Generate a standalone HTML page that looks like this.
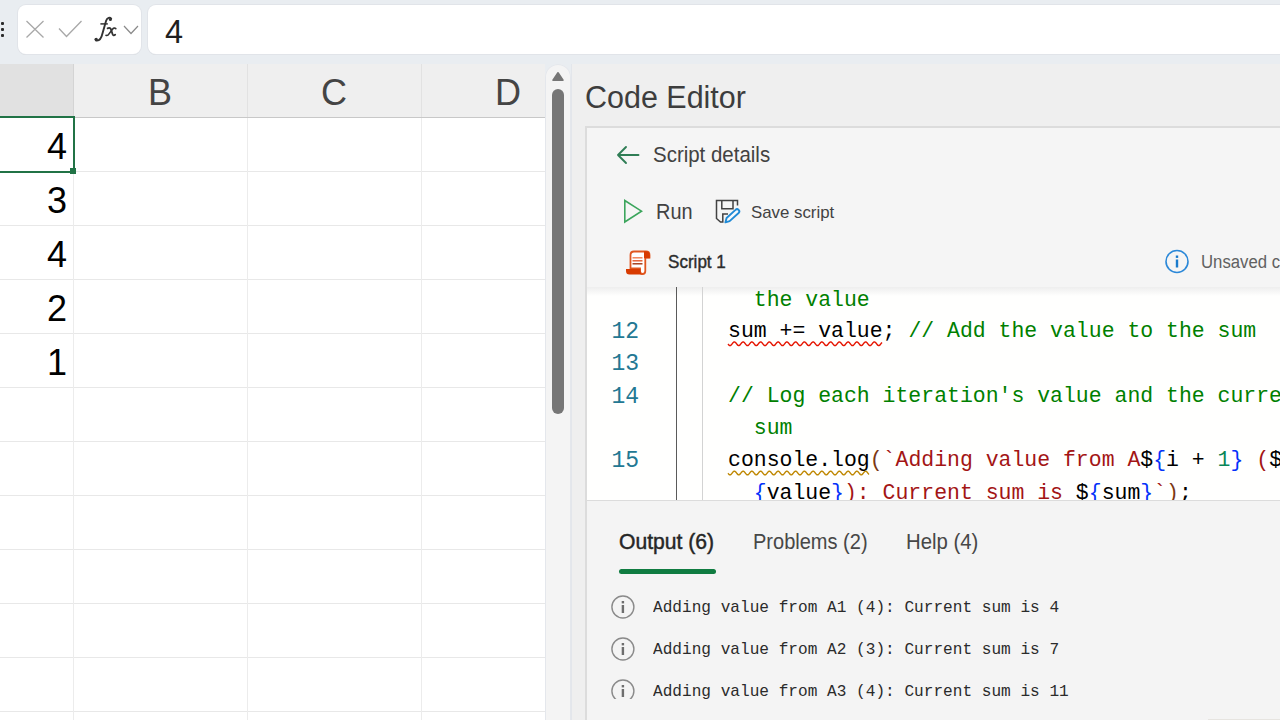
<!DOCTYPE html><html><head><meta charset="utf-8"><title>Code Editor</title><style>
*{margin:0;padding:0;box-sizing:border-box}
html,body{width:1280px;height:720px;overflow:hidden;background:#e9edf1;font-family:"Liberation Sans",sans-serif;position:relative}
.a{position:absolute}
.t{position:absolute;white-space:pre;line-height:1}
.m{font-family:"Liberation Mono",monospace}
</style></head><body>
<div class="a" style="left:1px;top:22px;width:3px;height:3px;background:#2b2b2b;border-radius:1px"></div>
<div class="a" style="left:1px;top:28px;width:3px;height:3px;background:#2b2b2b;border-radius:1px"></div>
<div class="a" style="left:1px;top:34px;width:3px;height:3px;background:#2b2b2b;border-radius:1px"></div>
<div class="a" style="left:18px;top:4.5px;width:122.5px;height:49.5px;background:#fff;border-radius:8px;box-shadow:0 0 0 1px #e1e4e9,0 1px 0 #d4d7db"></div>
<svg class="a" style="left:0;top:0" width="160" height="60">
<path d="M26.5 21 L43.5 37.5 M43.5 21 L26.5 37.5" stroke="#a8a8a8" stroke-width="1.3" fill="none"/>
<path d="M59 28.5 L66.5 36.5 L81.5 21" stroke="#a8a8a8" stroke-width="1.3" fill="none"/>
<path d="M124 26 L131 33.5 L138 26" stroke="#8a8a8a" stroke-width="1.2" fill="none"/>
</svg>
<svg class="a" style="left:0;top:0" width="160" height="60">
<path d="M111.2 18.6 C110 17.2 107.2 17.4 106.1 20.8 L102.6 33 C101.6 37.4 99.6 40.6 97 40.6 C95.8 40.6 95.2 39.8 95.6 39" stroke="#333" stroke-width="1.9" fill="none" stroke-linecap="round"/>
<circle cx="110.4" cy="19.5" r="1.5" fill="#333"/>
<circle cx="96.3" cy="39.3" r="1.5" fill="#333"/>
<path d="M100.4 23.9 L107.8 23.9" stroke="#333" stroke-width="1.5"/>
<path d="M107.6 28.4 C109.4 27.4 110.8 28.2 111.3 30.2 L112.4 33.8 C112.9 35.6 114.2 35.8 115.2 34.6" stroke="#333" stroke-width="1.8" fill="none" stroke-linecap="round"/>
<path d="M115.8 28.6 C114.8 27.6 113.4 28 112.3 29.4 L109.2 33.6 C108.2 35.2 107 35.8 106 35.3" stroke="#333" stroke-width="1.6" fill="none" stroke-linecap="round"/>
</svg>
<div class="a" style="left:148px;top:4.5px;width:1140px;height:49.5px;background:#fff;border-radius:8px;box-shadow:0 0 0 1px #e1e4e9,0 1px 0 #d4d7db"></div>
<div class="t" style="left:165px;top:15.5px;font-size:32.5px;color:#1f1f1f">4</div>
<div class="a" style="left:0;top:64px;width:545px;height:54px;background:#efefef;border-bottom:1px solid #c8c8c8"></div>
<div class="a" style="left:0;top:64px;width:73px;height:53px;background:#e1e1e1"></div>
<div class="a" style="left:73px;top:64px;width:1px;height:53px;background:#d4d4d4"></div>
<div class="a" style="left:247px;top:64px;width:1px;height:53px;background:#e2e2e2"></div>
<div class="a" style="left:421px;top:64px;width:1px;height:53px;background:#e2e2e2"></div>
<div class="t" style="left:148px;top:75px;font-size:36px;color:#444">B</div>
<div class="t" style="left:321px;top:75px;font-size:36px;color:#444">C</div>
<div class="t" style="left:495px;top:75px;font-size:36px;color:#444">D</div>
<div class="a" style="left:0;top:118px;width:545px;height:602px;background:#fff"></div>
<div class="a" style="left:0;top:171px;width:545px;height:1px;background:#e8e8e8"></div>
<div class="a" style="left:0;top:225px;width:545px;height:1px;background:#e8e8e8"></div>
<div class="a" style="left:0;top:279px;width:545px;height:1px;background:#e8e8e8"></div>
<div class="a" style="left:0;top:333px;width:545px;height:1px;background:#e8e8e8"></div>
<div class="a" style="left:0;top:387px;width:545px;height:1px;background:#e8e8e8"></div>
<div class="a" style="left:0;top:441px;width:545px;height:1px;background:#e8e8e8"></div>
<div class="a" style="left:0;top:495px;width:545px;height:1px;background:#e8e8e8"></div>
<div class="a" style="left:0;top:549px;width:545px;height:1px;background:#e8e8e8"></div>
<div class="a" style="left:0;top:603px;width:545px;height:1px;background:#e8e8e8"></div>
<div class="a" style="left:0;top:657px;width:545px;height:1px;background:#e8e8e8"></div>
<div class="a" style="left:0;top:711px;width:545px;height:1px;background:#e8e8e8"></div>
<div class="a" style="left:73px;top:118px;width:1px;height:602px;background:#ececec"></div>
<div class="a" style="left:247px;top:118px;width:1px;height:602px;background:#ececec"></div>
<div class="a" style="left:421px;top:118px;width:1px;height:602px;background:#ececec"></div>
<div class="t" style="left:0;width:67px;text-align:right;top:128.5px;font-size:36px;color:#000">4</div>
<div class="t" style="left:0;width:67px;text-align:right;top:182.5px;font-size:36px;color:#000">3</div>
<div class="t" style="left:0;width:67px;text-align:right;top:236.5px;font-size:36px;color:#000">4</div>
<div class="t" style="left:0;width:67px;text-align:right;top:290.5px;font-size:36px;color:#000">2</div>
<div class="t" style="left:0;width:67px;text-align:right;top:344.5px;font-size:36px;color:#000">1</div>
<div class="a" style="left:-10px;top:116px;width:85px;height:57px;border:2px solid #217346"></div>
<div class="a" style="left:70px;top:168px;width:6px;height:6px;background:#217346"></div>
<div class="a" style="left:544.5px;top:64px;width:26.5px;height:700px;background:#f4f4f4;border-radius:13px 13px 0 0;box-shadow:inset 0 0 0 1px #e4e7ec"></div>
<svg class="a" style="left:545px;top:64px" width="26" height="30"><path d="M8 16.2 L13 8.8 L18 16.2 Z" fill="#767676" stroke="#767676" stroke-width="1.6" stroke-linejoin="round"/></svg>
<div class="a" style="left:552px;top:89px;width:12px;height:325px;background:#767676;border-radius:6px"></div>
<div class="a" style="left:571px;top:64px;width:709px;height:656px;background:#efefef;border-left:1px solid #e3e6eb"></div>
<div class="t" style="left:585px;top:82px;font-size:31px;color:#3d3d3d;transform:scaleX(0.983);transform-origin:0 0">Code Editor</div>
<div class="a" style="left:585px;top:126px;width:700px;height:600px;background:#f5f5f5;border:2px solid #dcdcdc"></div>
<svg class="a" style="left:600px;top:130px" width="60" height="40"><path d="M18 25 L38.5 25 M26 17 L18 25 L26 33" stroke="#2f7d55" stroke-width="1.9" fill="none" stroke-linecap="round" stroke-linejoin="round"/></svg>
<div class="t" style="left:653px;top:144px;font-size:22px;color:#424242;transform:scaleX(0.93);transform-origin:0 0">Script details</div>
<svg class="a" style="left:610px;top:190px" width="40" height="40"><path d="M14.8 10.5 L14.8 32 L31.5 21.2 Z" stroke="#3ba55c" stroke-width="1.6" fill="none" stroke-linejoin="miter"/></svg>
<div class="t" style="left:656px;top:200.5px;font-size:22px;color:#424242;transform:scaleX(0.905);transform-origin:0 0">Run</div>
<svg class="a" style="left:705px;top:190px" width="50" height="40">
<path d="M11.5 23 L11.5 10.5 L32.5 10.5 L32.5 15.5" stroke="#424242" stroke-width="1.5" fill="none"/>
<path d="M11.5 23 L11.5 28.5 L15.5 32 L17.8 32 L17.8 24 L23 24" stroke="#424242" stroke-width="1.5" fill="none"/>
<path d="M16.8 10.5 L16.8 18.8 L28 18.8 L28 10.5" stroke="#424242" stroke-width="1.5" fill="none"/>
<path d="M20.4 32.4 L21.6 28 L30.5 19.9 A2.15 2.15 0 0 1 33.6 23 L24.6 31.1 Z" stroke="#1f8ad6" stroke-width="1.9" fill="#f7fafd" stroke-linejoin="round"/>
</svg>
<div class="t" style="left:751px;top:204px;font-size:17px;color:#424242;transform:scaleX(0.99);transform-origin:0 0">Save script</div>
<svg class="a" style="left:615px;top:240px" width="50" height="45">
<path d="M15.5 28.5 L15.5 15 Q15.5 11.5 19 11.5 L31 11.5 Q34.5 11.5 34.5 15 L34.5 17.5 L30.3 17.5 L30.3 31 Q30.3 34 27.5 34 Q25 34 25 31 L25 28.5 Z" fill="#fff" stroke="#e0561f" stroke-width="1.8"/>
<path d="M29 11.2 L31 11.2 Q34.8 11.2 34.8 15 L34.8 18.2 L29 18.2Z" fill="#d83b01"/>
<path d="M11 29 L25.5 29 L25.5 31 Q25.5 34.5 28 34.5 L14.5 34.5 Q11 34.5 11 31Z" fill="#d83b01"/>
<path d="M17.5 17.8 L27.5 17.8" stroke="#f07b4c" stroke-width="1.4"/>
<path d="M17.5 20.8 L27.5 20.8" stroke="#e4572a" stroke-width="1.4"/>
<path d="M17.5 23.8 L27.5 23.8" stroke="#a0320c" stroke-width="1.4"/>
</svg>
<div class="t" style="left:668px;top:254px;font-size:17.5px;color:#2c2c2c;-webkit-text-stroke:0.4px #2c2c2c;transform:scaleX(0.975);transform-origin:0 0">Script 1</div>
<svg class="a" style="left:1160px;top:240px" width="40" height="40">
<circle cx="17" cy="21.5" r="11" stroke="#2b88d8" stroke-width="1.6" fill="none"/>
<rect x="15.8" y="19.5" width="2.4" height="8" fill="#1a7bcc"/>
<rect x="15.8" y="15.5" width="2.4" height="2.4" fill="#1a7bcc"/>
</svg>
<div class="t" style="left:1200.5px;top:253px;font-size:18px;color:#616161;transform:scaleX(0.93);transform-origin:0 0">Unsaved changes</div>
<div class="a" style="left:587px;top:287px;width:700px;height:213px;background:#fffffe;overflow:hidden">
<div class="a" style="left:0;top:0;width:700px;height:9px;background:linear-gradient(#eeeeee,#fffffe)"></div>
<div class="a" style="left:89px;top:0;width:1px;height:213px;background:#5a5a5a"></div>
<div class="a" style="left:115px;top:0;width:1px;height:213px;background:#d3d3d3"></div>
</div>
<div class="a" style="left:587px;top:287px;width:700px;height:213px;overflow:hidden">
<div class="a" style="left:-587px;top:-287px;width:1280px;height:720px">
<div class="t m" style="left:753.76px;top:289.5px;font-size:21.47px"><span style="color:#008000">the value</span></div>
<div class="t m" style="left:560px;width:79px;text-align:right;top:321.0px;font-size:23px;color:#237893">12</div>
<div class="t m" style="left:728.00px;top:320.5px;font-size:21.47px"><span style="color:#000000">sum += value; </span><span style="color:#008000">// Add the value to the sum</span></div>
<div class="t m" style="left:560px;width:79px;text-align:right;top:353.25px;font-size:23px;color:#237893">13</div>
<div class="t m" style="left:728.00px;top:352.75px;font-size:21.47px"></div>
<div class="t m" style="left:560px;width:79px;text-align:right;top:386.25px;font-size:23px;color:#237893">14</div>
<div class="t m" style="left:728.00px;top:385.75px;font-size:21.47px"><span style="color:#008000">// Log each iteration&#x27;s value and the current</span></div>
<div class="t m" style="left:753.76px;top:418.25px;font-size:21.47px"><span style="color:#008000">sum</span></div>
<div class="t m" style="left:560px;width:79px;text-align:right;top:450.0px;font-size:23px;color:#237893">15</div>
<div class="t m" style="left:728.00px;top:449.5px;font-size:21.47px"><span style="color:#000000">console.log</span><span style="color:#7b3814">(</span><span style="color:#a31515">`Adding value from A</span><span style="color:#000000">$</span><span style="color:#0431fa">{</span><span style="color:#000000">i + </span><span style="color:#098658">1</span><span style="color:#0431fa">}</span><span style="color:#a31515"> (</span><span style="color:#000000">$</span></div>
<div class="t m" style="left:753.76px;top:482.5px;font-size:21.47px"><span style="color:#0431fa">{</span><span style="color:#000000">value</span><span style="color:#0431fa">}</span><span style="color:#a31515">): Current sum is </span><span style="color:#000000">$</span><span style="color:#0431fa">{</span><span style="color:#000000">sum</span><span style="color:#0431fa">}</span><span style="color:#a31515">`</span><span style="color:#7b3814">)</span><span style="color:#000000">;</span></div>
</div></div>
<svg class="a" style="left:0;top:0" width="1280" height="720"><polyline points="728.00,344.00 728.50,344.63 729.00,345.14 729.50,345.48 730.00,345.60 730.50,345.48 731.00,345.14 731.50,344.63 732.00,344.00 732.50,343.34 733.00,342.73 733.50,342.25 734.00,341.97 734.50,341.91 735.00,342.08 735.50,342.47 736.00,343.02 736.50,343.67 737.00,344.32 737.50,344.90 738.00,345.34 738.50,345.57 739.00,345.57 739.50,345.34 740.00,344.90 740.50,344.32 741.00,343.67 741.50,343.02 742.00,342.47 742.50,342.08 743.00,341.91 743.50,341.97 744.00,342.25 744.50,342.73 745.00,343.34 745.50,344.00 746.00,344.63 746.50,345.14 747.00,345.48 747.50,345.60 748.00,345.48 748.50,345.14 749.00,344.63 749.50,344.00 750.00,343.34 750.50,342.73 751.00,342.25 751.50,341.97 752.00,341.91 752.50,342.08 753.00,342.47 753.50,343.02 754.00,343.67 754.50,344.32 755.00,344.90 755.50,345.34 756.00,345.57 756.50,345.57 757.00,345.34 757.50,344.90 758.00,344.32 758.50,343.67 759.00,343.02 759.50,342.47 760.00,342.08 760.50,341.91 761.00,341.97 761.50,342.25 762.00,342.73 762.50,343.34 763.00,344.00 763.50,344.63 764.00,345.14 764.50,345.48 765.00,345.60 765.50,345.48 766.00,345.14 766.50,344.63 767.00,344.00 767.50,343.34 768.00,342.73 768.50,342.25 769.00,341.97 769.50,341.91 770.00,342.08 770.50,342.47 771.00,343.02 771.50,343.67 772.00,344.32 772.50,344.90 773.00,345.34 773.50,345.57 774.00,345.57 774.50,345.34 775.00,344.90 775.50,344.32 776.00,343.67 776.50,343.02 777.00,342.47 777.50,342.08 778.00,341.91 778.50,341.97 779.00,342.25 779.50,342.73 780.00,343.34 780.50,344.00 781.00,344.63 781.50,345.14 782.00,345.48 782.50,345.60 783.00,345.48 783.50,345.14 784.00,344.63 784.50,344.00 785.00,343.34 785.50,342.73 786.00,342.25 786.50,341.97 787.00,341.91 787.50,342.08 788.00,342.47 788.50,343.02 789.00,343.67 789.50,344.32 790.00,344.90 790.50,345.34 791.00,345.57 791.50,345.57 792.00,345.34 792.50,344.90 793.00,344.32 793.50,343.67 794.00,343.02 794.50,342.47 795.00,342.08 795.50,341.91 796.00,341.97 796.50,342.25 797.00,342.73 797.50,343.34 798.00,344.00 798.50,344.63 799.00,345.14 799.50,345.48 800.00,345.60 800.50,345.48 801.00,345.14 801.50,344.63 802.00,344.00 802.50,343.34 803.00,342.73 803.50,342.25 804.00,341.97 804.50,341.91 805.00,342.08 805.50,342.47 806.00,343.02 806.50,343.67 807.00,344.32 807.50,344.90 808.00,345.34 808.50,345.57 809.00,345.57 809.50,345.34 810.00,344.90 810.50,344.32 811.00,343.67 811.50,343.02 812.00,342.47 812.50,342.08 813.00,341.91 813.50,341.97 814.00,342.25 814.50,342.73 815.00,343.34 815.50,344.00 816.00,344.63 816.50,345.14 817.00,345.48 817.50,345.60 818.00,345.48 818.50,345.14 819.00,344.63 819.50,344.00 820.00,343.34 820.50,342.73 821.00,342.25 821.50,341.97 822.00,341.91 822.50,342.08 823.00,342.47 823.50,343.02 824.00,343.67 824.50,344.32 825.00,344.90 825.50,345.34 826.00,345.57 826.50,345.57 827.00,345.34 827.50,344.90 828.00,344.32 828.50,343.67 829.00,343.02 829.50,342.47 830.00,342.08 830.50,341.91 831.00,341.97 831.50,342.25 832.00,342.73 832.50,343.34 833.00,344.00 833.50,344.63 834.00,345.14 834.50,345.48 835.00,345.60 835.50,345.48 836.00,345.14 836.50,344.63 837.00,344.00 837.50,343.34 838.00,342.73 838.50,342.25 839.00,341.97 839.50,341.91 840.00,342.08 840.50,342.47 841.00,343.02 841.50,343.67 842.00,344.32 842.50,344.90 843.00,345.34 843.50,345.57 844.00,345.57 844.50,345.34 845.00,344.90 845.50,344.32 846.00,343.67 846.50,343.02 847.00,342.47 847.50,342.08 848.00,341.91 848.50,341.97 849.00,342.25 849.50,342.73 850.00,343.34 850.50,344.00 851.00,344.63 851.50,345.14 852.00,345.48 852.50,345.60 853.00,345.48 853.50,345.14 854.00,344.63 854.50,344.00 855.00,343.34 855.50,342.73 856.00,342.25 856.50,341.97 857.00,341.91 857.50,342.08 858.00,342.47 858.50,343.02 859.00,343.67 859.50,344.32 860.00,344.90 860.50,345.34 861.00,345.57 861.50,345.57 862.00,345.34 862.50,344.90 863.00,344.32 863.50,343.67 864.00,343.02 864.50,342.47 865.00,342.08 865.50,341.91 866.00,341.97 866.50,342.25 867.00,342.73 867.50,343.34 868.00,344.00 868.50,344.63 869.00,345.14 869.50,345.48 870.00,345.60 870.50,345.48 871.00,345.14 871.50,344.63 872.00,344.00 872.50,343.34 873.00,342.73 873.50,342.25 874.00,341.97 874.50,341.91 875.00,342.08 875.50,342.47 876.00,343.02 876.50,343.67 877.00,344.32 877.50,344.90 878.00,345.34 878.50,345.57 879.00,345.57 879.50,345.34 880.00,344.90 880.50,344.32 881.00,343.67 881.50,343.02 882.00,342.47" stroke="#e51400" stroke-width="1.4" fill="none"/></svg>
<svg class="a" style="left:0;top:0" width="1280" height="720"><polyline points="728.00,473.25 728.50,473.88 729.00,474.39 729.50,474.73 730.00,474.85 730.50,474.73 731.00,474.39 731.50,473.88 732.00,473.25 732.50,472.59 733.00,471.98 733.50,471.50 734.00,471.22 734.50,471.16 735.00,471.33 735.50,471.72 736.00,472.27 736.50,472.92 737.00,473.57 737.50,474.15 738.00,474.59 738.50,474.82 739.00,474.82 739.50,474.59 740.00,474.15 740.50,473.57 741.00,472.92 741.50,472.27 742.00,471.72 742.50,471.33 743.00,471.16 743.50,471.22 744.00,471.50 744.50,471.98 745.00,472.59 745.50,473.25 746.00,473.88 746.50,474.39 747.00,474.73 747.50,474.85 748.00,474.73 748.50,474.39 749.00,473.88 749.50,473.25 750.00,472.59 750.50,471.98 751.00,471.50 751.50,471.22 752.00,471.16 752.50,471.33 753.00,471.72 753.50,472.27 754.00,472.92 754.50,473.57 755.00,474.15 755.50,474.59 756.00,474.82 756.50,474.82 757.00,474.59 757.50,474.15 758.00,473.57 758.50,472.92 759.00,472.27 759.50,471.72 760.00,471.33 760.50,471.16 761.00,471.22 761.50,471.50 762.00,471.98 762.50,472.59 763.00,473.25 763.50,473.88 764.00,474.39 764.50,474.73 765.00,474.85 765.50,474.73 766.00,474.39 766.50,473.88 767.00,473.25 767.50,472.59 768.00,471.98 768.50,471.50 769.00,471.22 769.50,471.16 770.00,471.33 770.50,471.72 771.00,472.27 771.50,472.92 772.00,473.57 772.50,474.15 773.00,474.59 773.50,474.82 774.00,474.82 774.50,474.59 775.00,474.15 775.50,473.57 776.00,472.92 776.50,472.27 777.00,471.72 777.50,471.33 778.00,471.16 778.50,471.22 779.00,471.50 779.50,471.98 780.00,472.59 780.50,473.25 781.00,473.88 781.50,474.39 782.00,474.73 782.50,474.85 783.00,474.73 783.50,474.39 784.00,473.88 784.50,473.25 785.00,472.59 785.50,471.98 786.00,471.50 786.50,471.22 787.00,471.16 787.50,471.33 788.00,471.72 788.50,472.27 789.00,472.92 789.50,473.57 790.00,474.15 790.50,474.59 791.00,474.82 791.50,474.82 792.00,474.59 792.50,474.15 793.00,473.57 793.50,472.92 794.00,472.27 794.50,471.72 795.00,471.33 795.50,471.16 796.00,471.22 796.50,471.50 797.00,471.98 797.50,472.59 798.00,473.25 798.50,473.88 799.00,474.39 799.50,474.73 800.00,474.85 800.50,474.73 801.00,474.39 801.50,473.88 802.00,473.25 802.50,472.59 803.00,471.98 803.50,471.50 804.00,471.22 804.50,471.16 805.00,471.33 805.50,471.72 806.00,472.27 806.50,472.92 807.00,473.57 807.50,474.15 808.00,474.59 808.50,474.82 809.00,474.82 809.50,474.59 810.00,474.15 810.50,473.57 811.00,472.92 811.50,472.27 812.00,471.72 812.50,471.33 813.00,471.16 813.50,471.22 814.00,471.50 814.50,471.98 815.00,472.59 815.50,473.25 816.00,473.88 816.50,474.39 817.00,474.73 817.50,474.85 818.00,474.73 818.50,474.39 819.00,473.88 819.50,473.25 820.00,472.59 820.50,471.98 821.00,471.50 821.50,471.22 822.00,471.16 822.50,471.33 823.00,471.72 823.50,472.27 824.00,472.92 824.50,473.57 825.00,474.15 825.50,474.59 826.00,474.82 826.50,474.82 827.00,474.59 827.50,474.15 828.00,473.57 828.50,472.92 829.00,472.27 829.50,471.72 830.00,471.33 830.50,471.16 831.00,471.22 831.50,471.50 832.00,471.98 832.50,472.59 833.00,473.25 833.50,473.88 834.00,474.39 834.50,474.73 835.00,474.85 835.50,474.73 836.00,474.39 836.50,473.88 837.00,473.25 837.50,472.59 838.00,471.98 838.50,471.50 839.00,471.22 839.50,471.16 840.00,471.33 840.50,471.72 841.00,472.27 841.50,472.92 842.00,473.57 842.50,474.15 843.00,474.59 843.50,474.82 844.00,474.82 844.50,474.59 845.00,474.15 845.50,473.57 846.00,472.92 846.50,472.27 847.00,471.72 847.50,471.33 848.00,471.16 848.50,471.22 849.00,471.50 849.50,471.98 850.00,472.59 850.50,473.25 851.00,473.88 851.50,474.39 852.00,474.73 852.50,474.85 853.00,474.73 853.50,474.39 854.00,473.88 854.50,473.25 855.00,472.59 855.50,471.98 856.00,471.50 856.50,471.22 857.00,471.16 857.50,471.33 858.00,471.72 858.50,472.27 859.00,472.92 859.50,473.57 860.00,474.15 860.50,474.59 861.00,474.82 861.50,474.82 862.00,474.59 862.50,474.15 863.00,473.57 863.50,472.92 864.00,472.27 864.50,471.72 865.00,471.33 865.50,471.16 866.00,471.22 866.50,471.50 867.00,471.98 867.50,472.59 868.00,473.25 868.50,473.88 869.00,474.39" stroke="#bf8803" stroke-width="1.4" fill="none"/></svg>
<div class="a" style="left:587px;top:500px;width:700px;height:220px;background:#f4f4f4;border-top:1px solid #dcdcdc"></div>
<div class="t" style="left:619px;top:530.5px;font-size:22px;color:#262626;-webkit-text-stroke:0.45px #262626;transform:scaleX(0.96);transform-origin:0 0">Output (6)</div>
<div class="a" style="left:619px;top:569px;width:97px;height:5px;background:#107c41;border-radius:3px"></div>
<div class="t" style="left:753px;top:530.5px;font-size:22px;color:#474747;transform:scaleX(0.91);transform-origin:0 0">Problems (2)</div>
<div class="t" style="left:905.5px;top:530.5px;font-size:22px;color:#474747;transform:scaleX(0.925);transform-origin:0 0">Help (4)</div>
<div class="a" style="left:587px;top:580px;width:700px;height:119px;overflow:hidden">
<div class="a" style="left:-587px;top:-580px;width:1280px;height:720px">
<svg class="a" style="left:600px;top:586.7px" width="40" height="40"><circle cx="22.9" cy="20" r="11" stroke="#8a8a8a" stroke-width="1.4" fill="none"/><rect x="21.7" y="18" width="2.4" height="8" fill="#6e6e6e"/><rect x="21.7" y="14" width="2.4" height="2.4" fill="#6e6e6e"/></svg>
<div class="t m" style="left:653px;top:599.80px;font-size:16.6px;color:#2b2b2b;transform:scaleX(0.971);transform-origin:0 0">Adding value from A1 (4): Current sum is 4</div>
<svg class="a" style="left:600px;top:629.0px" width="40" height="40"><circle cx="22.9" cy="20" r="11" stroke="#8a8a8a" stroke-width="1.4" fill="none"/><rect x="21.7" y="18" width="2.4" height="8" fill="#6e6e6e"/><rect x="21.7" y="14" width="2.4" height="2.4" fill="#6e6e6e"/></svg>
<div class="t m" style="left:653px;top:642.10px;font-size:16.6px;color:#2b2b2b;transform:scaleX(0.971);transform-origin:0 0">Adding value from A2 (3): Current sum is 7</div>
<svg class="a" style="left:600px;top:671.3px" width="40" height="40"><circle cx="22.9" cy="20" r="11" stroke="#8a8a8a" stroke-width="1.4" fill="none"/><rect x="21.7" y="18" width="2.4" height="8" fill="#6e6e6e"/><rect x="21.7" y="14" width="2.4" height="2.4" fill="#6e6e6e"/></svg>
<div class="t m" style="left:653px;top:684.40px;font-size:16.6px;color:#2b2b2b;transform:scaleX(0.971);transform-origin:0 0">Adding value from A3 (4): Current sum is 11</div>
</div></div>
<div class="a" style="left:1208px;top:718.5px;width:72px;height:2px;background:#e6e4e0"></div>
</body></html>
